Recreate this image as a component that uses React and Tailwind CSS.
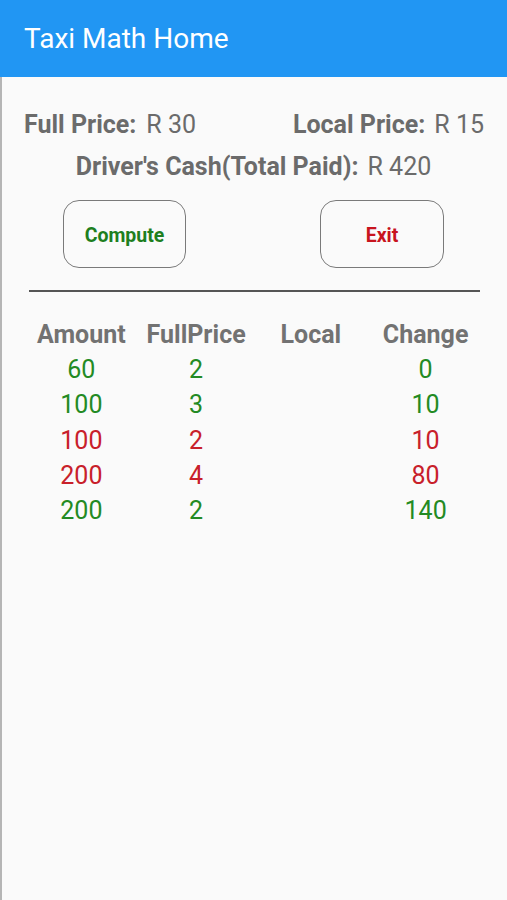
import React from "react";

const rows = [
  { a: "60", f: "2", l: "", c: "0", ok: true },
  { a: "100", f: "3", l: "", c: "10", ok: true },
  { a: "100", f: "2", l: "", c: "10", ok: false },
  { a: "200", f: "4", l: "", c: "80", ok: false },
  { a: "200", f: "2", l: "", c: "140", ok: true },
];

export default function App() {
  return (
    <div className="w-[507px] h-[900px] bg-[#fafafa] flex flex-col" style={{ fontFamily: "Roboto, 'Noto Sans', sans-serif" }}>
      <div className="h-[77px] bg-[#2196f3] flex items-center pl-[24px] shrink-0">
        <span className="text-white text-[28px] leading-none mt-[1px]">Taxi Math Home</span>
      </div>
      <div className="flex-1 border-l-[2px] border-[#b5b5b5] flex flex-col">
        <div className="flex justify-between pl-[22px] pr-[23px] pt-[33px] text-[25px] leading-[30px] text-[#6b6b6b]">
          <div><span className="font-bold">Full Price:</span><span className="ml-[10px]">R 30</span></div>
          <div><span className="font-bold">Local Price:</span><span className="ml-[9px]">R 15</span></div>
        </div>
        <div className="text-center text-[25px] leading-[30px] text-[#6b6b6b] mt-[12px] pr-[2px]">
          <span className="font-bold">Driver's Cash(Total Paid):</span><span className="ml-[9px]">R 420</span>
        </div>
        <div className="flex pl-[61px] gap-[134px] mt-[18px]">
          <button className="w-[123px] h-[68px] rounded-[16px] border-[1.5px] border-[#7a7a7a] bg-[#fafafa] text-[#1e7f1e] font-bold text-[19.5px] pt-[3px]">Compute</button>
          <button className="w-[124px] h-[68px] rounded-[16px] border-[1.5px] border-[#7a7a7a] bg-[#fafafa] text-[#c8141e] font-bold text-[19.5px] pt-[3px]">Exit</button>
        </div>
        <div className="mx-[27px] mt-[22px] h-[2px] bg-[#555555]"></div>
        <div className="grid grid-cols-4 pl-[22px] pr-[24px] mt-[25px] text-[25px]">
          <div className="text-center font-bold text-[#727272] leading-[35px]">Amount</div>
          <div className="text-center font-bold text-[#727272] leading-[35px]">FullPrice</div>
          <div className="text-center font-bold text-[#727272] leading-[35px]">Local</div>
          <div className="text-center font-bold text-[#727272] leading-[35px]">Change</div>
          {rows.map((r, i) => (
            <React.Fragment key={i}>
              <div className={`text-center leading-[35.3px] ${r.ok ? "text-[#238a23]" : "text-[#c8202a]"}`}>{r.a}</div>
              <div className={`text-center leading-[35.3px] ${r.ok ? "text-[#238a23]" : "text-[#c8202a]"}`}>{r.f}</div>
              <div className={`text-center leading-[35.3px] ${r.ok ? "text-[#238a23]" : "text-[#c8202a]"}`}>{r.l}</div>
              <div className={`text-center leading-[35.3px] ${r.ok ? "text-[#238a23]" : "text-[#c8202a]"}`}>{r.c}</div>
            </React.Fragment>
          ))}
        </div>
      </div>
    </div>
  );
}
